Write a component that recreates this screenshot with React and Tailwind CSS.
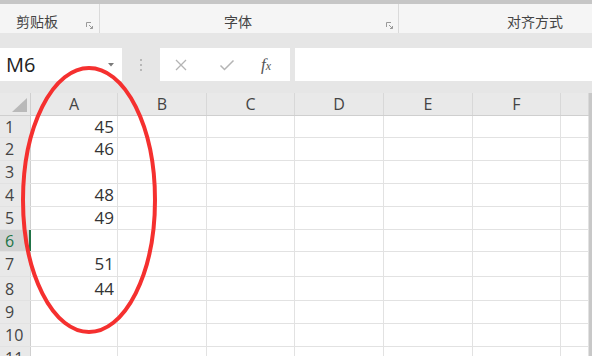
import React from 'react'

const cols = [
  { id: 'A', w: 87 },
  { id: 'B', w: 89 },
  { id: 'C', w: 88 },
  { id: 'D', w: 89 },
  { id: 'E', w: 89 },
  { id: 'F', w: 88 },
  { id: '', w: 28 },
]

const rows = [
  { n: 1, h: 22, v: '45' },
  { n: 2, h: 23, v: '46' },
  { n: 3, h: 23, v: '' },
  { n: 4, h: 23, v: '48' },
  { n: 5, h: 23, v: '49' },
  { n: 6, h: 22, v: '', sel: true },
  { n: 7, h: 25, v: '51' },
  { n: 8, h: 24, v: '44' },
  { n: 9, h: 23, v: '' },
  { n: 10, h: 23, v: '' },
  { n: 11, h: 23, v: '' },
]

const Launcher = () => (
  <svg width="7" height="7" viewBox="0 0 7 7" className="text-[#9a9a9a]">
    <path d="M0.5 5V0.5H5" fill="none" stroke="currentColor" strokeWidth="1" />
    <path d="M3 3L6.5 6.5M6.5 4V6.5H4" fill="none" stroke="currentColor" strokeWidth="1" />
  </svg>
)

export default function App() {
  return (
    <div className="relative w-[592px] h-[356px] overflow-hidden bg-white" style={{ fontFamily: '"Open Sans", "Noto Sans CJK SC", sans-serif' }}>
      <div className="h-[4px] bg-[#c6c6c6]" />

      {/* ribbon group labels */}
      <div className="flex h-[29px] bg-[#f5f5f5] text-[14px] text-[#444]" style={{ fontFamily: '"Noto Sans CJK SC", sans-serif' }}>
        <div className="relative w-[100px] border-r border-[#dadada] flex items-center pl-[16px] pt-[6px]">
          剪贴板
          <div className="absolute left-[86px] top-[18px]"><Launcher /></div>
        </div>
        <div className="relative w-[299px] border-r border-[#dadada] flex items-center justify-center pt-[6px] pr-[22px]">
          字体
          <div className="absolute left-[286px] top-[18px]"><Launcher /></div>
        </div>
        <div className="flex-1 flex items-center justify-end pr-[29px] pt-[6px]">对齐方式</div>
      </div>

      {/* formula bar */}
      <div className="h-[60px] bg-[#e6e6e6] pt-[15px]">
        <div className="flex h-[33px] items-stretch">
          <div className="relative w-[122px] bg-white flex items-center pl-[6px] text-[20px] text-[#222]">
            M6
            <svg width="6" height="4" viewBox="0 0 6 4" className="absolute left-[108px] top-[15px]">
              <path d="M0 0H6L3 3.5Z" fill="#7a7a7a" />
            </svg>
          </div>
          <div className="w-[38px] flex flex-col items-center justify-center gap-[3px]">
            <span className="w-[2px] h-[2px] rounded-full bg-[#a8a8a8]" />
            <span className="w-[2px] h-[2px] rounded-full bg-[#a8a8a8]" />
            <span className="w-[2px] h-[2px] rounded-full bg-[#a8a8a8]" />
          </div>
          <div className="w-[130px] bg-white flex items-center">
            <svg width="14" height="14" viewBox="0 0 14 14" className="ml-[14px]">
              <path d="M2 2L12 12M12 2L2 12" stroke="#b4b4b4" strokeWidth="1.3" />
            </svg>
            <svg width="16" height="14" viewBox="0 0 16 14" className="ml-[31px]">
              <path d="M1.5 7.5L5.5 11.5L14.5 2.5" fill="none" stroke="#b4b4b4" strokeWidth="1.5" />
            </svg>
            <span className="ml-[26px] text-[17px] italic text-[#555]" style={{ fontFamily: '"Liberation Serif", serif' }}>
              f<span className="text-[12px]">x</span>
            </span>
          </div>
          <div className="w-[5px]" />
          <div className="flex-1 bg-white" />
        </div>
      </div>

      {/* grid */}
      <div className="flex">
        <div className="flex-1">
          {/* column headers */}
          <div className="flex h-[23px] bg-[#e9e9e9] border-b border-[#cfcfcf] text-[16px] text-[#444]">
            <div className="relative w-[31px] border-r border-[#cfcfcf]">
              <svg width="15" height="14" viewBox="0 0 15 14" className="absolute right-[3px] bottom-[3px]">
                <path d="M15 0V14H0Z" fill="#b9b9b9" />
              </svg>
            </div>
            {cols.map((c, i) => (
              <div key={i} className="flex items-center justify-center border-r border-[#d8d8d8]" style={{ width: c.w }}>
                {c.id}
              </div>
            ))}
          </div>
          {rows.map((r) => (
            <div key={r.n} className="flex border-b border-[#e2e2e2]" style={{ height: r.h }}>
              <div
                className={
                  r.sel
                    ? 'w-[31px] flex items-center pl-[5px] text-[16px] text-[#217346] bg-[#d3d3d3] border-r-2 border-[#217346]'
                    : 'w-[31px] flex items-center pl-[5px] text-[16px] text-[#444] bg-[#e9e9e9] border-r border-[#cfcfcf]'
                }
              >
                {r.n}
              </div>
              {cols.map((c, i) => (
                <div
                  key={i}
                  className="flex items-center justify-end pr-[3px] border-r border-[#e2e2e2] text-[17px] text-[#333]"
                  style={{ width: c.w }}
                >
                  {i === 0 ? r.v : ''}
                </div>
              ))}
            </div>
          ))}
        </div>
        <div className="w-[3px] bg-[#c8c8c8]" />
      </div>

      {/* red annotation ellipse */}
      <svg width="592" height="356" className="absolute left-0 top-0 pointer-events-none">
        <ellipse cx="89" cy="200" rx="66" ry="132" fill="none" stroke="#f5302f" strokeWidth="4" />
      </svg>
    </div>
  )
}
